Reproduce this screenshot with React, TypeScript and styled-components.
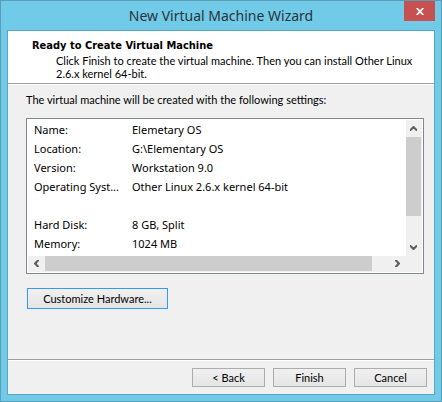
import React from "react";
import styled, { createGlobalStyle } from "styled-components";

const GlobalStyle = createGlobalStyle`
  *, *::before, *::after { box-sizing: border-box; }
  html, body, #root { height: 100%; }
  body { margin: 0; }
`;

const uiFont = `Lato, "Liberation Sans", sans-serif`;
const boldFont = `"DejaVu Sans Condensed", "DejaVu Sans", sans-serif`;
const listFont = `"Noto Sans", "Open Sans", sans-serif`;

const Window = styled.main`
  display: flex;
  flex-direction: column;
  min-height: 100%;
  padding: 0 6px 6px;
  border: 1px solid #5a9db8;
  background: #72cae9;
  color: #000;
  font: 11px/13px ${uiFont};
`;

const TitleBar = styled.header`
  display: grid;
  grid-template-columns: 31px 1fr 31px;
  height: 29px;
`;

const Title = styled.h1`
  grid-column: 2;
  margin: 0;
  text-align: center;
  font: 400 14px/29px ${listFont};
  color: #26353c;
  white-space: nowrap;
`;

const CloseButton = styled.button`
  display: flex;
  align-items: center;
  justify-content: center;
  height: 20px;
  padding: 0;
  border: 0;
  background: #c75050;
`;

const Client = styled.div`
  display: flex;
  flex: 1;
  flex-direction: column;
  border: 1px solid #5aa7c2;
  background: #f0f0f0;
`;

const Banner = styled.section`
  padding: 7px 12px 3px 24px;
  background: #fff;
`;

const Heading = styled.h2`
  margin: 0;
  font: 700 11px/15px ${boldFont};
`;

const Description = styled.p`
  margin: 1px 0 0;
  padding-left: 24px;
`;

const Separator = styled.hr`
  width: 100%;
  height: 2px;
  margin: 0;
  border: 0;
  border-top: 1px solid #a0a0a0;
  background: #fff;
`;

const Content = styled.section`
  display: flex;
  flex: 1;
  flex-direction: column;
  align-items: flex-start;
  padding: 8px 10px 0 18px;
`;

const Intro = styled.p`
  margin: 0 0 12px;
`;

const ListBox = styled.div`
  display: grid;
  grid-template-columns: 1fr 16px;
  grid-template-rows: 136px 16px;
  width: 100%;
  padding: 1px;
  border: 1px solid #828790;
  background: #fff;
`;

const Settings = styled.table`
  align-self: start;
  width: 100%;
  table-layout: fixed;
  border-collapse: collapse;
  font: 11px/19px ${listFont};

  th, td {
    height: 19px;
    padding: 0 0 0 6px;
    text-align: left;
    font-weight: 400;
    white-space: nowrap;
  }
  th { width: 98px; }
`;

const ScrollBar = styled.div<{ $vertical?: boolean }>`
  display: flex;
  flex-direction: ${(p) => (p.$vertical ? "column" : "row")};
  grid-column: ${(p) => (p.$vertical ? "2" : "1 / 3")};
  padding: ${(p) => (p.$vertical ? "0 1px 0 0" : "0 16px 1px 0")};
  background: #f0f0f0;
`;

const ScrollArrow = styled.button`
  display: flex;
  flex: 0 0 17px;
  align-items: center;
  justify-content: center;
  padding: 0;
  border: 0;
  background: #f0f0f0;
`;

const Track = styled.div<{ $vertical?: boolean }>`
  display: flex;
  flex: 1;
  flex-direction: ${(p) => (p.$vertical ? "column" : "row")};
`;

const Thumb = styled.div<{ $share: number }>`
  flex: 0 0 ${(p) => p.$share}%;
  background: #cdcdcd;
`;

const Button = styled.button<{ $focused?: boolean }>`
  min-width: ${(p) => (p.$focused ? "141px" : "73px")};
  height: ${(p) => (p.$focused ? "21px" : "19px")};
  padding: 0;
  border: 1px solid ${(p) => (p.$focused ? "#3399ff" : "#acacac")};
  background: linear-gradient(#f0f0f0, #e5e5e5);
  color: #000;
  font: inherit;
`;

const CustomizeRow = styled.div`
  padding: 14px 0 0 1px;
`;

const Footer = styled.footer`
  display: flex;
  gap: 8px;
  justify-content: flex-end;
  padding: 7px;
`;

const arrows = {
  up: "M0 5V3L3 0h1l3 3v2H6L4 3H3L1 5z",
  down: "M0 0h1l2 2h1l2-2h1v2L4 5H3L0 2z",
  left: "M5 0H3L0 3v1l3 3h2V6L3 4V3l2-2z",
  right: "M0 0h2l3 3v1L2 7H0V6l2-2V3L0 1z",
};

function Arrow({ dir }: { dir: keyof typeof arrows }) {
  const tall = dir === "left" || dir === "right";
  return (
    <svg width={tall ? 5 : 7} height={tall ? 7 : 5} fill="#606060" aria-hidden="true">
      <path d={arrows[dir]} />
    </svg>
  );
}

const settings = [
  ["Name:", "Elemetary OS"],
  ["Location:", "G:\\Elementary OS"],
  ["Version:", "Workstation 9.0"],
  ["Operating Syst...", "Other Linux 2.6.x kernel 64-bit"],
  ["", ""],
  ["Hard Disk:", "8 GB, Split"],
  ["Memory:", "1024 MB"],
];

export default function App() {
  return (
    <>
      <GlobalStyle />
      <Window>
        <TitleBar>
          <Title>New Virtual Machine Wizard</Title>
          <CloseButton aria-label="Close">
            <svg width="8" height="7" viewBox="0 0 8 7" stroke="#fff" strokeWidth="1.7" aria-hidden="true">
              <path d="M.7 0l6.6 7M7.3 0L.7 7" />
            </svg>
          </CloseButton>
        </TitleBar>
        <Client>
          <Banner>
            <Heading>Ready to Create Virtual Machine</Heading>
            <Description>
              Click Finish to create the virtual machine. Then you can install Other Linux 2.6.x kernel 64-bit.
            </Description>
          </Banner>
          <Separator />
          <Content>
            <Intro>The virtual machine will be created with the following settings:</Intro>
            <ListBox>
              <Settings>
                <tbody>
                  {settings.map(([name, value], i) => (
                    <tr key={i}>
                      <th scope="row">{name}</th>
                      <td>{value}</td>
                    </tr>
                  ))}
                </tbody>
              </Settings>
              <ScrollBar $vertical>
                <ScrollArrow aria-label="Scroll up"><Arrow dir="up" /></ScrollArrow>
                <Track $vertical><Thumb $share={77} /></Track>
                <ScrollArrow aria-label="Scroll down"><Arrow dir="down" /></ScrollArrow>
              </ScrollBar>
              <ScrollBar>
                <ScrollArrow aria-label="Scroll left"><Arrow dir="left" /></ScrollArrow>
                <Track><Thumb $share={95} /></Track>
                <ScrollArrow aria-label="Scroll right"><Arrow dir="right" /></ScrollArrow>
              </ScrollBar>
            </ListBox>
            <CustomizeRow>
              <Button $focused>Customize Hardware...</Button>
            </CustomizeRow>
          </Content>
          <Separator />
          <Footer>
            <Button>&lt; Back</Button>
            <Button>Finish</Button>
            <Button>Cancel</Button>
          </Footer>
        </Client>
      </Window>
    </>
  );
}
